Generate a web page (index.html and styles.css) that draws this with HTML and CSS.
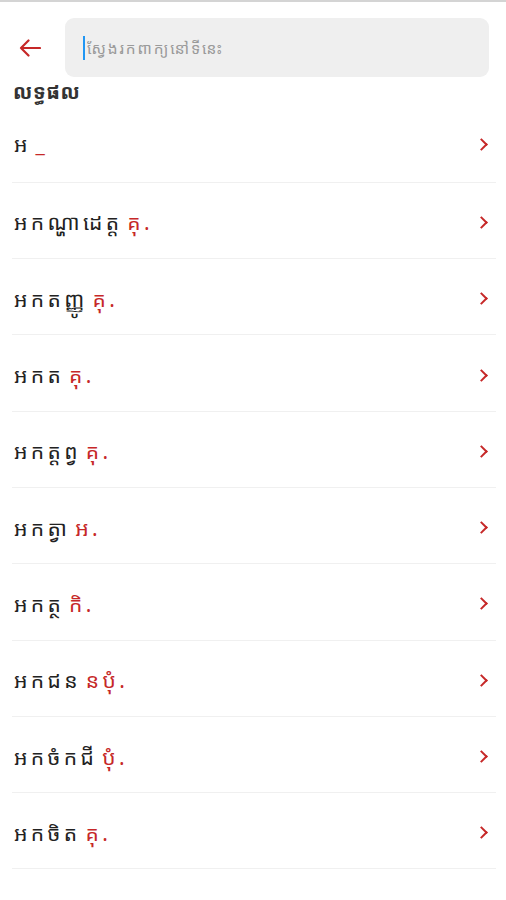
FILE: index.html
```html
<!DOCTYPE html>
<html lang="km">
<head>
    <meta charset="UTF-8">
    <meta name="viewport" content="width=device-width, initial-scale=1.0">
    <title>វចនានុក្រម - ស្វែងរក</title>
    <link rel="stylesheet" href="styles.css">
</head>
<body>

    <div class="top-edge"></div>

    <header class="search-bar">
        <button class="back-btn" aria-label="Back">
            <svg width="22" height="18" viewBox="0 0 22 18">
                <path d="M21 9H2M9.5 1.5L2 9l7.5 7.5" fill="none" stroke="#c62828" stroke-width="2.2" stroke-linecap="round" stroke-linejoin="round"/>
            </svg>
        </button>
        <div class="search-box">
            <span class="caret"></span>
            <input type="text" class="search-input" placeholder="ស្វែងរកពាក្យនៅទីនេះ">
        </div>
    </header>

    <h2 class="results-title">លទ្ធផល</h2>

    <ul class="word-list">
        <li class="word-item first"><span class="word">អ <b class="kind">_</b></span><span class="chev"></span></li>
        <li class="word-item"><span class="word">អកណ្ហាដេត្ត <b class="kind">គុ.</b></span><span class="chev"></span></li>
        <li class="word-item"><span class="word">អកតញ្ញូ <b class="kind">គុ.</b></span><span class="chev"></span></li>
        <li class="word-item"><span class="word">អកត <b class="kind">គុ.</b></span><span class="chev"></span></li>
        <li class="word-item"><span class="word">អកត្តព្វ <b class="kind">គុ.</b></span><span class="chev"></span></li>
        <li class="word-item"><span class="word">អកត្វា <b class="kind">អ.</b></span><span class="chev"></span></li>
        <li class="word-item"><span class="word">អកត្ថ <b class="kind">កិ.</b></span><span class="chev"></span></li>
        <li class="word-item"><span class="word">អកជន <b class="kind">នបុំ.</b></span><span class="chev"></span></li>
        <li class="word-item"><span class="word">អកចំកជី <b class="kind">បុំ.</b></span><span class="chev"></span></li>
        <li class="word-item"><span class="word">អកចិត <b class="kind">គុ.</b></span><span class="chev"></span></li>
        <li class="word-item"><span class="word">អកចិត្តំ <b class="kind">គុ.</b></span><span class="chev"></span></li>
    </ul>

</body>
</html>
```

FILE: styles.css
```css
* {
    margin: 0;
    padding: 0;
    box-sizing: border-box;
}

body {
    background: white;
    font-family: "Noto Sans Khmer", "Khmer OS Battambang", "Khmer OS", "Noto Sans", sans-serif;
    color: #222;
    height: 900px;
    overflow: hidden;
}

.top-edge {
    height: 2px;
    background: #d4d4d4;
}

.search-bar {
    display: flex;
    align-items: center;
    padding: 16px 17px 0 19px;
}

.back-btn {
    width: 46px;
    height: 59px;
    border: none;
    background: none;
    display: flex;
    align-items: center;
    justify-content: flex-start;
}

.search-box {
    flex: 1;
    height: 59px;
    background: #efefef;
    border-radius: 9px;
    display: flex;
    align-items: center;
    padding-left: 18px;
}

.caret {
    width: 2px;
    height: 24px;
    background: #2196f3;
    margin-right: 2px;
}

.search-input {
    flex: 1;
    border: none;
    background: transparent;
    outline: none;
    font-family: inherit;
    font-size: 15.5px;
    letter-spacing: 1.9px;
}

.search-input::placeholder {
    color: #9a9a9a;
}

.results-title {
    font-size: 20px;
    font-weight: bold;
    color: #333;
    padding-left: 13px;
    line-height: 29.5px;
    letter-spacing: 0.5px;
}

.word-list {
    list-style: none;
    margin: 0 10px 0 12px;
    height: 900px;
    overflow: hidden;
}

.word-item {
    height: 76.3px;
    display: flex;
    align-items: center;
    justify-content: space-between;
    padding: 4px 7px 0 2px;
    border-bottom: 1px solid #f0f0f0;
}

.word-item.first {
    padding-top: 0;
}

.word {
    font-size: 21px;
    letter-spacing: 3.4px;
    word-spacing: -4px;
    color: #222;
}

.kind {
    font-weight: normal;
    color: #c62828;
}

.chev {
    width: 9px;
    height: 9px;
    border-top: 2px solid #c62828;
    border-right: 2px solid #c62828;
    transform: rotate(45deg);
    margin-right: 3px;
}
```
